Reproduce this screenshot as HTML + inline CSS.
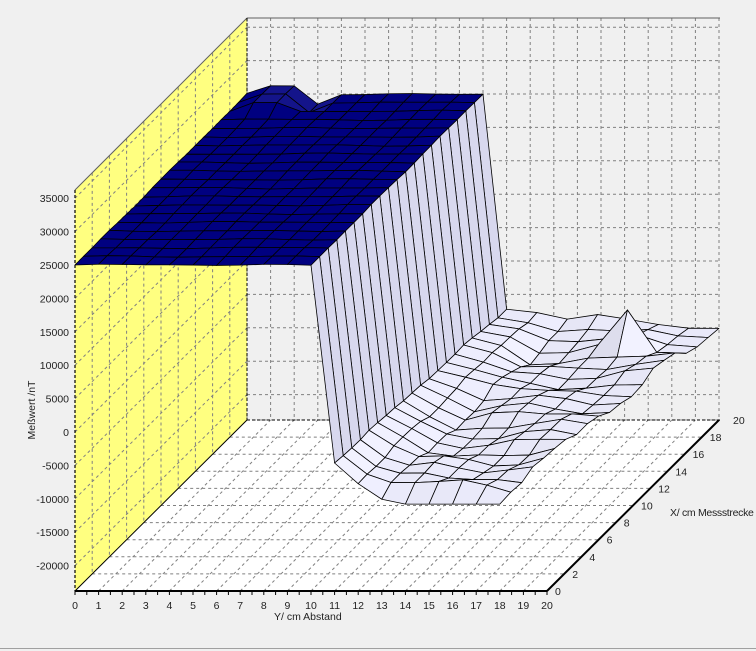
<!DOCTYPE html>
<html><head><meta charset="utf-8"><style>
html,body{margin:0;padding:0;background:#f0f0f0;width:756px;height:651px;overflow:hidden}
svg{display:block}
text{font-family:"Liberation Sans",Arial,sans-serif;font-size:10.5px;fill:#222}
</style></head><body>
<svg id="s" width="756" height="651" viewBox="0 0 756 651" xmlns="http://www.w3.org/2000/svg">
<rect width="756" height="651" fill="#f0f0f0"/>
<line x1="0" y1="648.5" x2="756" y2="648.5" stroke="#a0a0a0"/>
<g id="bg"></g>
<g id="surf" stroke="#000" stroke-width="0.8" stroke-linejoin="round"></g>
<g id="lab"></g>
</svg>
<script>
(function(){
var NS="http://www.w3.org/2000/svg";
function el(p,t,a,txt){var e=document.createElementNS(NS,t);for(var k in a)e.setAttribute(k,a[k]);if(txt!==undefined)e.textContent=txt;p.appendChild(e);return e;}
var bg=document.getElementById('bg'),sf=document.getElementById('surf'),lb=document.getElementById('lab');
var DX=8.6,DY=8.55,IX=23.6;
function zy(z){return 432-z*0.00668;}
el(bg,'polygon',{points:'247,18 720,18 720,420 247,420',fill:'#f0f0f0'});
el(bg,'polygon',{points:'75,591 547,591 719,420 247,420',fill:'#ffffff'});
el(bg,'polygon',{points:'75,190 247,18 247,420 75,591',fill:'#ffff80'});
var dash={stroke:'#808080','stroke-width':1,'stroke-dasharray':'3,3',fill:'none'};
function L(x1,y1,x2,y2,a){var o={x1:x1,y1:y1,x2:x2,y2:y2};for(var k in a)o[k]=a[k];el(bg,'line',o);}
for(var i=1;i<=20;i++){var x=247+i*IX;L(x,18,x,420,dash);}
for(var z=-20000;z<=35000;z+=5000){var y=zy(z)-171;if(y>18&&y<420)L(247,y,720,y,dash);}
for(var j=2;j<=20;j+=2){var x=75+j*DX,y0=190-j*DY;L(x,y0,x,591-j*DY,dash);}
for(var z=-20000;z<=35000;z+=5000){var y=zy(z);L(75,y,247,y-171,dash);}
for(var j=2;j<=20;j+=2){var y=591-j*DY;L(75+j*DX,y,547+j*DX,y,dash);}
for(var i=1;i<=20;i++){var x=75+i*IX;L(x,591,x+172,420,dash);}
L(247,18,720,18,{stroke:'#606060','stroke-width':1});
L(75,190,247,18,{stroke:'#606060','stroke-width':1});
L(75,190,75,591,{stroke:'#000','stroke-width':1.2,'stroke-dasharray':'3,2'});
L(247,18,247,420,{stroke:'#000','stroke-width':1,'stroke-dasharray':'3,2'});
L(75,591,547,591,{stroke:'#000','stroke-width':2});
L(547,591,719,420,{stroke:'#000','stroke-width':2});
L(75,591,247,420,{stroke:'#000','stroke-width':1});
L(247,420,720,420,{stroke:'#000','stroke-width':1,'stroke-dasharray':'3,2'});
for(var i=0;i<=40;i++){var x=75+i*IX/2;L(x,591,x,595,{stroke:'#000','stroke-width':1});}
function nz(i,j){return Math.sin(i*0.9+j*0.7)*0.5+Math.sin(i*1.7-j*1.1)*0.3+Math.sin(j*2.3+i*0.4)*0.2;}
function Z(i,j){
 if(i<=10){var z=25000+nz(i,j)*150;if(j>=18&&i>=1&&i<=2)z+=1200;if(j>=19&&i==3)z-=1500;return z;}
 var z=-9300+nz(i,j)*1300;
 if(i==11)z=-4500-j*130+nz(i,j)*300;
 if(i==12)z=-7500+nz(i,j)*600;
 if(j==0&&i>=14)z=-10800;
 if(i==16&&j==17)z=-3500;
 if(i>=17&&j>=17)z=-10000+nz(i,j)*400;
 return z;}
function IE(i,j){return i<=11?i:11+(i-11)*(7+2*j/20)/7;}
function P(i,j){return [75+IE(i,j)*IX+j*DX, zy(Z(i,j))-j*DY];}
for(var j=19;j>=0;j--){for(var i=0;i<18;i++){
 var a=P(i,j),b=P(i+1,j),c=P(i+1,j+1),d=P(i,j+1);
 var fill;
 if(i<10){fill='#000080';if(j>=18&&i>=1&&i<=3)fill='#14148a';}
 else if(i==10){fill='#d8d8ee';}
 else{var s=(Z(i,j)+Z(i,j+1)-Z(i+1,j)-Z(i+1,j+1))/2;var v=Math.round(236+Math.max(-24,Math.min(10,s/250)));fill='rgb('+(v-4)+','+(v-4)+','+Math.min(255,v+12)+')';}
 el(sf,'polygon',{points:a.join(',')+' '+b.join(',')+' '+c.join(',')+' '+d.join(','),fill:fill});
}}
var yl=[35000,30000,25000,20000,15000,10000,5000,0,-5000,-10000,-15000,-20000];
yl.forEach(function(z){el(lb,'text',{x:69,y:zy(z)+4,'text-anchor':'end'},String(z));});
for(var i=0;i<=20;i++)el(lb,'text',{x:75+i*IX,y:609,'text-anchor':'middle'},String(i));
for(var j=0;j<=20;j+=2)el(lb,'text',{x:555+j*DX+(j==20?6:0),y:595-j*DY,'text-anchor':'start'},String(j));
el(lb,'text',{x:274,y:620},'Y/ cm   Abstand');
el(lb,'text',{x:670,y:516,'font-size':'10','letter-spacing':'-0.3'},'X/ cm Messstrecke');
el(lb,'text',{x:0,y:0,transform:'translate(35,410) rotate(-90)','text-anchor':'middle','font-size':'10'},'Meßwert /nT');
})();
</script>
</body></html>
